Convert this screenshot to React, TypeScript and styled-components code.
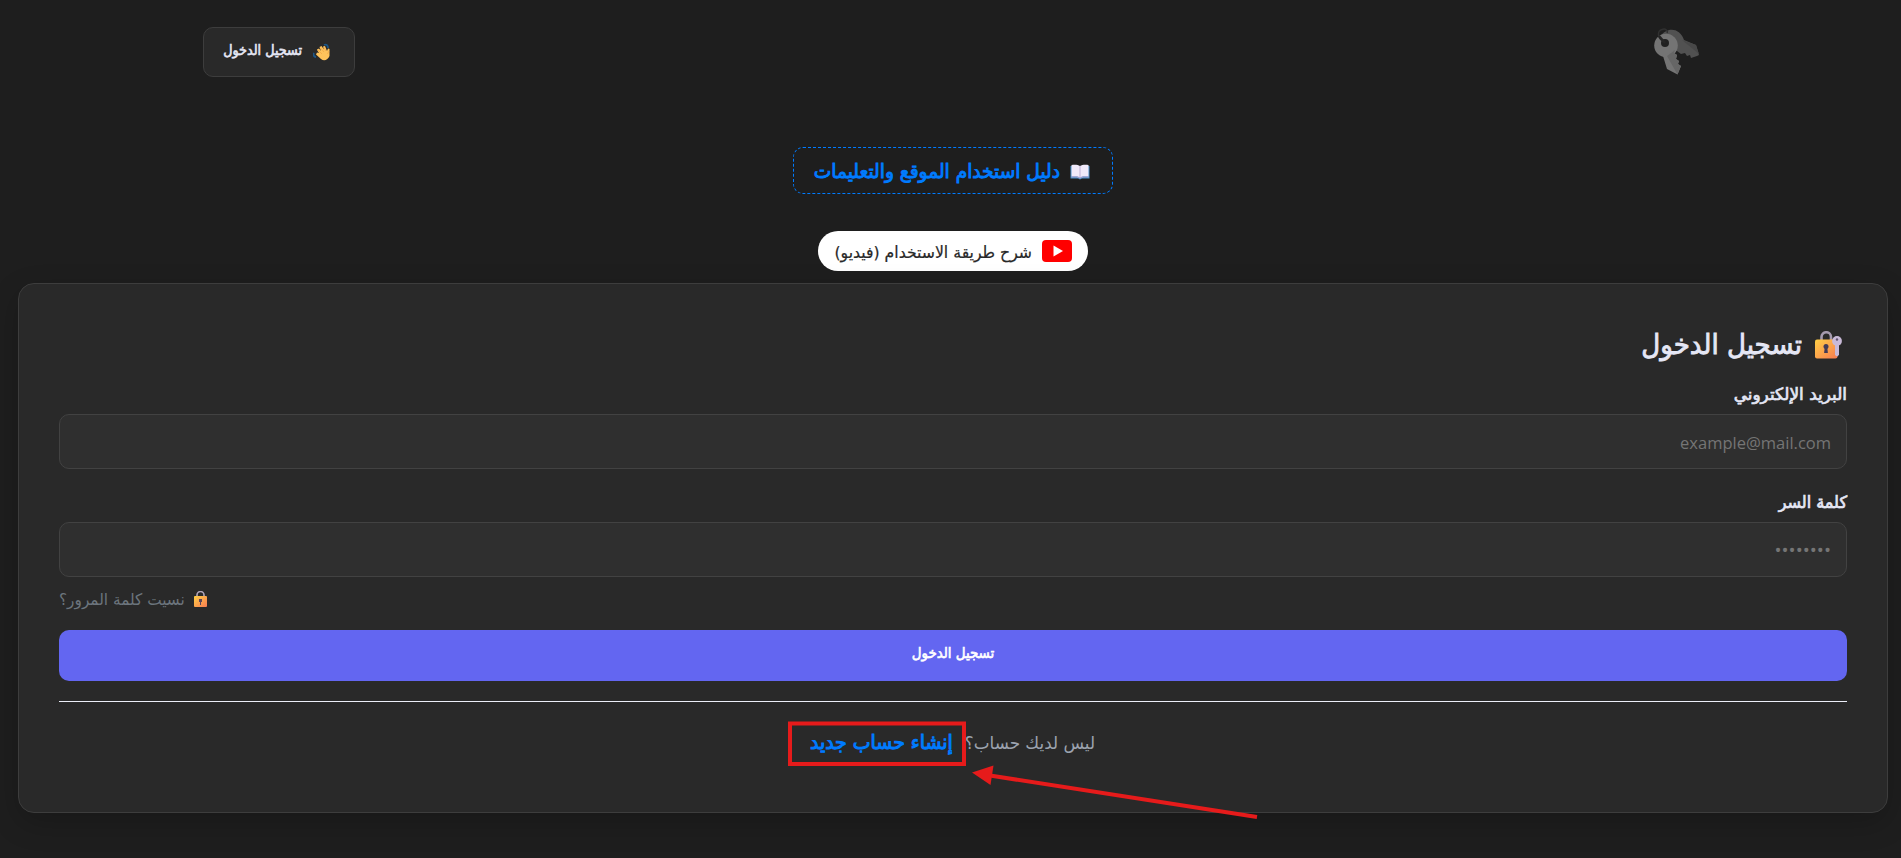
import React, { useState } from 'react';
import styled, { createGlobalStyle } from 'styled-components';

const GlobalStyle = createGlobalStyle`
  * {
    box-sizing: border-box;
  }

  body {
    margin: 0;
    background-color: #1e1e1e;
    color: #e5e7f5;
    font-family: 'DejaVu Sans', sans-serif;
    overflow: hidden;
  }

  svg {
    flex-shrink: 0;
  }
`;

const Page = styled.div`
  position: relative;
  direction: rtl;
  width: 1901px;
  height: 858px;
  padding: 0 13px 0 18px;
  display: flex;
  flex-direction: column;
  align-items: center;
`;

const Header = styled.header`
  width: 1500px;
  height: 104px;
  display: flex;
  justify-content: space-between;
  align-items: flex-start;
  padding: 27px 0 0;
`;

const Logo = styled.a`
  display: flex;
  padding: 1px 2px 0 0;
`;

const HeaderButton = styled.button`
  width: 152px;
  height: 50px;
  display: flex;
  align-items: center;
  padding: 0 24px 0 0;
  gap: 11px;
  border: 1px solid #3d3d3d;
  border-radius: 10px;
  background-color: #292929;
  color: #e5e7f5;
  font-family: inherit;
`;

//text piece, $weight is the thickness added to the regular face
const Label = styled.span<{ $size: number; $weight?: number; $lift?: number; $tall?: number }>`
  display: block;
  font-size: ${(p) => p.$size}px;
  font-weight: 400;
  -webkit-text-stroke: ${(p) => p.$weight || 0}px currentColor;
  line-height: 20px;
  margin-bottom: ${(p) => p.$lift || 0}px;
  transform: scaleY(${(p) => p.$tall || 1});
  white-space: nowrap;
`;

const GuideLink = styled.a`
  width: 320px;
  height: 47px;
  margin-top: 43px;
  padding-right: 22px;
  display: flex;
  align-items: center;
  gap: 10px;
  border: 1px dashed #007bff;
  border-radius: 10px;
  color: #007bff;
`;

const VideoLink = styled.a`
  width: 270px;
  height: 40px;
  margin-top: 37px;
  padding-right: 16px;
  display: flex;
  align-items: center;
  gap: 10px;
  border-radius: 20px;
  background-color: #fff;
  color: #282828;
`;

const Card = styled.main`
  width: 1870px;
  height: 530px;
  margin-top: 12px;
  padding: 40px 40px 0;
  border: 1px solid #3d3d3d;
  border-radius: 16px;
  background-color: #292929;
  box-shadow: 0 10px 30px rgba(0, 0, 0, 0.2);
`;

const Title = styled.h2`
  display: flex;
  align-items: center;
  gap: 13px;
  height: 42px;
  margin: 0 0 14px;
  padding-right: 5px;
`;

const Field = styled.div`
  display: flex;
  flex-direction: column;
  height: 108px;
`;

const FieldName = styled.label`
  height: 34px;
  display: flex;
  align-items: center;
`;

const Input = styled.input<{ $size?: number }>`
  width: 100%;
  height: 55px;
  padding: 1px 15px 0;
  border: 1px solid #424242;
  border-radius: 10px;
  outline: none;
  background-color: #2f2f2f;
  color: #e5e7f5;
  font-family: 'Open Sans', 'DejaVu Sans', sans-serif;
  font-size: ${(p) => p.$size || 16.5}px;

  &::placeholder {
    color: #757575;
    opacity: 1;
  }
`;

const Forgot = styled.a`
  height: 27px;
  margin-top: -10px;
  display: flex;
  align-items: center;
  justify-content: flex-end;
  gap: 9px;
  color: #6c757d;
`;

const Submit = styled.button`
  width: 100%;
  height: 51px;
  margin-top: 17px;
  display: flex;
  align-items: center;
  justify-content: center;
  border: none;
  border-radius: 10px;
  background-color: #6366f1;
  color: #fff;
  font-family: inherit;
`;

const Divider = styled.hr`
  height: 1px;
  margin: 20px 0 0;
  border: none;
  background-color: #eceef8;
`;

const Register = styled.div`
  display: flex;
  align-items: center;
  height: 82px;
  padding-right: 752px;
  gap: 12px;
  color: #9ca3af;

  a {
    color: #007bff;
  }
`;

const Marker = styled.svg`
  position: absolute;
  left: 780px;
  top: 715px;
  pointer-events: none;
`;

const KeysIcon = () => (
  <svg width="48" height="48" viewBox="0 0 48 48">
    <path d="M8 8C13-1 27-1 31 12L43 17L46 27L44 28L38 30L37 27L34 28L32 25L28 26L24 23L15 22Z" fill="#515151" />
    <path d="M29 12L43 17L46 26Z" fill="#484848" />
    <circle cx="13" cy="17.500" r="11.800" fill="#747474" />
    <path d="M10 28L14 41L24.500 46.500L28 38L25 36L26 33L23 31L24 27L21 25L22 22Z" fill="#747474" />
    <path d="M14 28L24.500 46.500L28 38L25 36L26 33L23 31L24 27L21 25L22 22Z" fill="#666" />
    <circle cx="12" cy="15" r="4" fill="#202020" />
    <path d="M11 14C4 10 4 3 9 1.500C13 0 15 3 14 5" fill="none" stroke="#303030" strokeWidth="1.500" />
    <path d="M6 8L12 15" stroke="#252525" strokeWidth="2.500" />
  </svg>
);

const WaveIcon = () => (
  <svg width="17" height="18" viewBox="0 0 17 18">
    <path d="M1 10C0 12 1 14 3 14M11 2C13 1 15 2 15 5" fill="none" stroke="#1c5687" strokeWidth="1.800" />
    <path
      d="M4 6.500L6 5.500L8 8L6.500 4L8.500 3L11 6.500L10 3.500L12 3L14 8L15 5.500L16.500 6L16.500 13C15 17 11 18.500 8 16L3 11.500L4 9.500L6 10L4 7Z"
      fill="#ffc35b"
    />
    <path d="M5 7L9 11M7.500 5L11 9M10.500 4L13 8M16 8L14.500 11" fill="none" stroke="#eea044" strokeWidth=".6" />
  </svg>
);

const BookIcon = () => (
  <svg width="20" height="18" viewBox="0 -2 20 18">
    <path d="M.5 2H19.500V14.500H12L10 15.500L8 14.500H.5Z" fill="#4c91c9" />
    <path d="M1.500 1C5 .5 8 .7 10 2C12 .7 15 .5 18.500 1V12.500C15 12 12 12.300 10 13.500C8 12.300 5 12 1.500 12.500Z" fill="#f0eafa" />
    <path d="M10 2V13.500" stroke="#bfb2d5" strokeWidth="1" />
    <path d="M1.500 13C5 12.500 8 12.800 10 14C12 12.800 15 12.500 18.500 13" fill="none" stroke="#bba9d5" />
  </svg>
);

const YoutubeIcon = () => (
  <svg width="30" height="22" viewBox="0 0 30 22">
    <rect width="30" height="22" rx="4" fill="#f00" />
    <path d="M11.500 5.500L21 11L11.500 16.500Z" fill="#fff" />
  </svg>
);

const LockGradient = ({ id }: { id: string }) => (
  <linearGradient id={id} x1="0" y1="0" x2="1" y2="1">
    <stop offset="0" stopColor="#ffcf45" />
    <stop offset="1" stopColor="#f97b52" />
  </linearGradient>
);

const LockKeyIcon = () => (
  <svg width="27" height="28" viewBox="0 0 27 28">
    <defs>
      <LockGradient id="lockKey" />
    </defs>
    <path d="M6.500 10V6a4.700 4.700 0 0 1 9.500 0v4" fill="none" stroke="#a59aae" strokeWidth="2.600" />
    <rect x="0" y="8.500" width="22.500" height="19" rx="2" fill="url(#lockKey)" />
    <circle cx="11" cy="15.500" r="2.500" fill="#433b57" />
    <path d="M9.800 16h2.400l.7 6h-3.800Z" fill="#433b57" />
    <circle cx="22" cy="10" r="4.900" fill="#c9bad8" />
    <path d="M20 13h4v11l-2 1.500l-2-1.500Z" fill="#c9bad8" />
    <circle cx="22" cy="8.500" r="1.200" fill="#5e526e" />
  </svg>
);

const LockIcon = () => (
  <svg width="13" height="18" viewBox="0 0 13 18">
    <defs>
      <LockGradient id="lock" />
    </defs>
    <path d="M3 6V4a3.500 3.500 0 0 1 7 0v2" fill="none" stroke="#b1a5b9" strokeWidth="1.600" />
    <rect x="0" y="5" width="13" height="11" rx="1" fill="url(#lock)" />
    <path d="M5 8h3v3h-1v3h-1v-3h-1Z" fill="#5d455a" />
  </svg>
);

function App() {
  const [email, setEmail] = useState('');
  const [password, setPassword] = useState('');

  return (
    <Page>
      <GlobalStyle />
      <Header>
        <Logo>
          <KeysIcon />
        </Logo>
        <HeaderButton>
          <WaveIcon />
          <Label $size={12.8} $weight={0.6} $lift={2} $tall={1.1}>تسجيل الدخول</Label>
        </HeaderButton>
      </Header>

      <GuideLink>
        <BookIcon />
        <Label $size={18.6} $weight={0.9} $lift={-2} $tall={1.05}>دليل استخدام الموقع والتعليمات</Label>
      </GuideLink>
      <VideoLink>
        <YoutubeIcon />
        <Label $size={15.7} $weight={0.2} $lift={-4} $tall={1.05}>شرح طريقة الاستخدام (فيديو)</Label>
      </VideoLink>

      <Card>
        <Title>
          <LockKeyIcon />
          <Label $size={26.1} $weight={0.8} $lift={2} $tall={1.06}>تسجيل الدخول</Label>
        </Title>
        <Field>
          <FieldName>
            <Label $size={16.9} $weight={0.7} $lift={6}>البريد الإلكتروني</Label>
          </FieldName>
          <Input
            placeholder="example@mail.com"
            value={email}
            onChange={(e: React.ChangeEvent<HTMLInputElement>) => setEmail(e.target.value)}
          />
        </Field>
        <Field>
          <FieldName>
            <Label $size={16} $weight={0.7} $lift={5} $tall={1.05}>كلمة السر</Label>
          </FieldName>
          <Input
            $size={18.8}
            type="password"
            placeholder="••••••••"
            value={password}
            onChange={(e: React.ChangeEvent<HTMLInputElement>) => setPassword(e.target.value)}
          />
        </Field>
        <Forgot>
          <LockIcon />
          <Label $size={15.3} $tall={1.05}>نسيت كلمة المرور؟</Label>
        </Forgot>
        <Submit>
          <Label $size={13.4} $weight={0.6} $lift={3} $tall={1.1}>تسجيل الدخول</Label>
        </Submit>
        <Divider />
        <Register>
          <Label $size={16.8} $tall={1.05}>ليس لديك حساب؟</Label>
          <a>
            <Label $size={18.9} $weight={1} $lift={2} $tall={1.05}>إنشاء حساب جديد</Label>
          </a>
        </Register>
      </Card>

      <Marker width="490" height="115" viewBox="780 715 490 115">
        <rect x="790" y="723.500" width="174" height="40.500" fill="none" stroke="#e61b1b" strokeWidth="4" />
        <path d="M1257 817L990 775.500" stroke="#e61b1b" strokeWidth="4" />
        <path d="M972 772.500L993.500 765.500L990.500 785Z" fill="#e61b1b" />
      </Marker>
    </Page>
  );
}

export default App;
